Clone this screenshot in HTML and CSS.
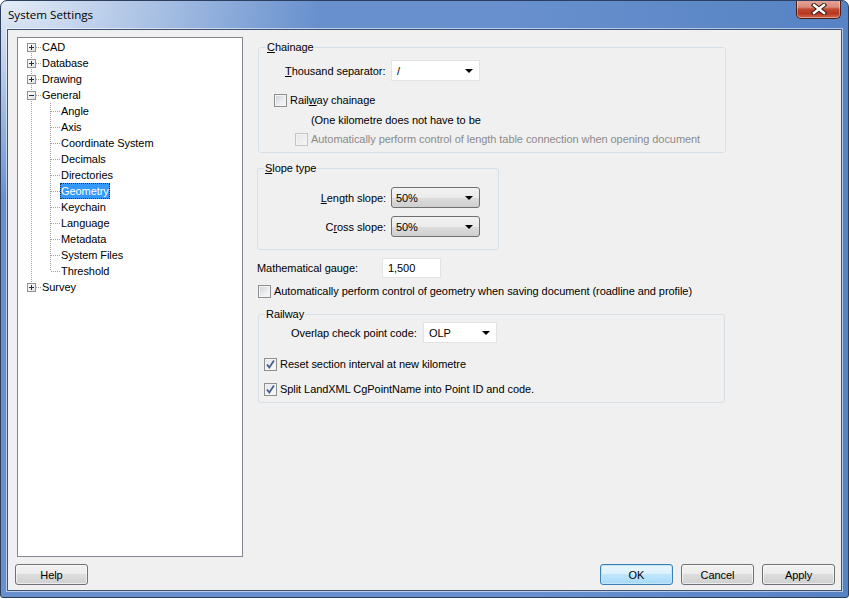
FILE: index.html
```html
<!DOCTYPE html>
<html lang="en">
<head>
  <meta charset="UTF-8" />
  <title>System Settings</title>
  <link rel="stylesheet" href="styles.css">
</head>
<body>
  <div class="window">
    <!-- Title bar -->
    <div class="titlebar">
      <span class="title">System Settings</span>
      <div class="close-btn">
        <svg width="16" height="12" viewBox="0 0 16 12">
          <path d="M3 2 L13 10 M13 2 L3 10" stroke="#3a1a14" stroke-width="4.4" stroke-linecap="square" fill="none" />
          <path d="M3 2 L13 10 M13 2 L3 10" stroke="#fff" stroke-width="2.4" stroke-linecap="square" fill="none" />
        </svg>
      </div>
    </div>

    <div class="client">
      <div class="main">
        <!-- Tree -->
        <div class="tree">
          <ul class="root">
            <li><div class="row"><span class="exp plus"></span><span class="dots"></span><span class="label">CAD</span></div></li>
            <li><div class="row"><span class="exp plus"></span><span class="dots"></span><span class="label">Database</span></div></li>
            <li><div class="row"><span class="exp plus"></span><span class="dots"></span><span class="label">Drawing</span></div></li>
            <li>
              <div class="row"><span class="exp"></span><span class="dots"></span><span class="label">General</span></div>
              <ul class="children">
                <li class="row"><span class="dots"></span><span class="label">Angle</span></li>
                <li class="row"><span class="dots"></span><span class="label">Axis</span></li>
                <li class="row"><span class="dots"></span><span class="label">Coordinate System</span></li>
                <li class="row"><span class="dots"></span><span class="label">Decimals</span></li>
                <li class="row"><span class="dots"></span><span class="label">Directories</span></li>
                <li class="row"><span class="dots"></span><span class="label selected">Geometry</span></li>
                <li class="row"><span class="dots"></span><span class="label">Keychain</span></li>
                <li class="row"><span class="dots"></span><span class="label">Language</span></li>
                <li class="row"><span class="dots"></span><span class="label">Metadata</span></li>
                <li class="row"><span class="dots"></span><span class="label">System Files</span></li>
                <li class="row"><span class="dots"></span><span class="label">Threshold</span></li>
              </ul>
            </li>
            <li><div class="row"><span class="exp plus"></span><span class="dots"></span><span class="label">Survey</span></div></li>
          </ul>
        </div>

        <!-- Settings panel -->
        <div class="panel">
          <fieldset class="group chainage">
            <legend><u>C</u>hainage</legend>
            <div class="field-row sep-row">
              <span class="sep-label"><u>T</u>housand separator:</span>
              <div class="combo flat w89"><span>/</span><i class="arrow"></i></div>
            </div>
            <div class="check-row rail-row">
              <span class="cb"></span><span>Rail<u>w</u>ay chainage</span>
            </div>
            <div class="note">(One kilometre does not have to be</div>
            <div class="check-row disabled">
              <span class="cb"></span><span>Automatically perform control of length table connection when opening document</span>
            </div>
          </fieldset>

          <fieldset class="group slope">
            <legend><u>S</u>lope type</legend>
            <div class="slope-grid">
              <span class="slope-label"><u>L</u>ength slope:</span>
              <div class="combo raised w89"><span>50%</span><i class="arrow"></i></div>
              <span class="slope-label">C<u>r</u>oss slope:</span>
              <div class="combo raised w89"><span>50%</span><i class="arrow"></i></div>
            </div>
          </fieldset>

          <div class="field-row gauge-row">
            <span class="gauge-label">Mathematical gauge:</span>
            <div class="textbox">1,500</div>
          </div>
          <div class="check-row geom-row">
            <span class="cb"></span><span>Automatically perform control of geometry when saving document (roadline and profile)</span>
          </div>

          <fieldset class="group railway">
            <legend>Railway</legend>
            <div class="field-row olp-row">
              <span class="olp-label">Overlap check point code:</span>
              <div class="combo flat w74"><span>OLP</span><i class="arrow"></i></div>
            </div>
            <div class="check-row rw-check reset-row">
              <span class="cb checked"><svg width="11" height="11" viewBox="0 0 11 11"><path d="M2 5.5 L4.3 8.5 L9 1.5" stroke="#4a5d8c" stroke-width="1.8" fill="none"/></svg></span><span>Reset section interval at new kilometre</span>
            </div>
            <div class="check-row rw-check split-row">
              <span class="cb checked"><svg width="11" height="11" viewBox="0 0 11 11"><path d="M2 5.5 L4.3 8.5 L9 1.5" stroke="#4a5d8c" stroke-width="1.8" fill="none"/></svg></span><span>Split LandXML CgPointName into Point ID and code.</span>
            </div>
          </fieldset>
        </div>
      </div>

      <!-- Dialog buttons -->
      <div class="buttons">
        <button class="btn">Help</button>
        <span class="spacer"></span>
        <button class="btn default">OK</button>
        <button class="btn">Cancel</button>
        <button class="btn">Apply</button>
      </div>
    </div>
  </div>
</body>
</html>
```

FILE: styles.css
```css
* {
  margin: 0;
  padding: 0;
  box-sizing: border-box;
}

body {
  background: #ffffff;
  font-family: 'Liberation Sans', Arial, sans-serif;
  font-size: 11px;
  letter-spacing: -0.06px;
  color: #000;
}

u {
  text-decoration: underline;
  text-underline-offset: 1px;
}

/* Window frame */
.window {
  width: 849px;
  height: 598px;
  border: 1px solid #2d3f5c;
  border-radius: 7px 7px 3px 3px;
  background:
    radial-gradient(ellipse 320px 200px at 0 0, rgba(236, 242, 250, 0.95), rgba(236, 242, 250, 0) 100%),
    linear-gradient(to right, #6790cd, #6890ce 60%, #5683c4 100%);
  display: flex;
  flex-direction: column;
  overflow: hidden;
}

.titlebar {
  height: 28px;
  display: flex;
  justify-content: space-between;
  align-items: flex-start;
  padding: 0 7px 0 7px;
}

.title {
  font-family: 'Open Sans', 'Noto Sans', sans-serif;
  font-size: 11.6px;
  letter-spacing: 0;
  color: #000;
  line-height: 28px;
}

.close-btn {
  width: 45px;
  height: 19px;
  margin-top: -1px;
  border: 1px solid #4a2018;
  border-top: none;
  border-radius: 0 0 5px 5px;
  background: linear-gradient(to bottom, #e7a799 0%, #d88a7a 40%, #c24a33 50%, #b8371f 75%, #d66a50 100%);
  box-shadow: inset 0 0 0 1px rgba(255, 255, 255, 0.35);
  display: flex;
  align-items: center;
  justify-content: center;
}

.client {
  flex: 1;
  margin: 0 6px 6px 6px;
  border: 1px solid #3e5274;
  box-shadow: 0 0 0 1px rgba(255, 255, 255, 0.55);
  background: #f0f0f0;
  display: flex;
  flex-direction: column;
}

.main {
  display: flex;
  padding: 7px 0 0 9px;
}

/* Tree */
.tree {
  width: 226px;
  height: 520px;
  background: #fff;
  border: 1px solid #828790;
  padding-top: 1px;
}

.tree ul {
  list-style: none;
}

.root {
  background: repeating-linear-gradient(to bottom, #a0a0a0 0 1px, transparent 1px 2px) 13px 8px / 1px calc(100% - 16px) no-repeat;
}

.children {
  background: repeating-linear-gradient(to bottom, #a0a0a0 0 1px, transparent 1px 2px) 32px 0 / 1px calc(100% - 8px) no-repeat;
}

.row {
  display: flex;
  align-items: center;
  height: 16px;
  line-height: 16px;
  padding-left: 9px;
}

.children .row {
  padding-left: 33px;
}

.exp {
  width: 9px;
  height: 9px;
  border: 1px solid #919191;
  background: linear-gradient(135deg, #ffffff, #e2e2e2);
  display: flex;
  align-items: center;
  justify-content: center;
  position: relative;
}

.exp::before {
  content: "";
  width: 5px;
  height: 1px;
  background: #1f3350;
}

.exp.plus::after {
  content: "";
  position: absolute;
  width: 1px;
  height: 5px;
  background: #1f3350;
}

.dots {
  width: 5px;
  height: 1px;
  background: repeating-linear-gradient(to right, #a0a0a0 0 1px, transparent 1px 2px);
}

.children .dots {
  width: 9px;
}

.label {
  padding: 0 1px;
  height: 16px;
}

.label.selected {
  background: #3399ff;
  color: #fff;
  outline: 1px dotted #1a2a40;
  outline-offset: -1px;
}

/* Right panel */
.panel {
  margin-left: 14px;
  display: flex;
  flex-direction: column;
  align-items: flex-start;
}

.group {
  border: 1px solid #d5dfe5;
  border-radius: 3px;
  padding: 0 0 0 6px;
}

.group legend {
  padding: 0 1px;
  line-height: 13px;
}

.chainage {
  width: 468px;
  margin: 4px 0 0 1px;
  padding: 6px 0 6px 7px;
}

.slope {
  width: 242px;
  margin-top: 9px;
  padding: 12px 0 12px 6px;
}

.railway {
  width: 467px;
  margin: 10px 0 0 1px;
  padding: 1px 0 6px 6px;
}

.field-row {
  display: flex;
  align-items: center;
}

.sep-label {
  margin-left: 19px;
  width: 106px;
}

.gauge-row {
  margin-top: 8px;
}

.gauge-label {
  width: 125px;
}

.olp-label {
  margin-left: 26px;
  width: 132px;
}

.check-row {
  display: flex;
  align-items: center;
  height: 13px;
  line-height: 13px;
  gap: 3px;
}

.rail-row {
  margin: 13px 0 0 8px;
}

.note {
  margin: 7px 0 0 45px;
  line-height: 13px;
}

.check-row.disabled {
  margin: 6px 0 0 29px;
  color: #8b8b8b;
}

.geom-row {
  margin: 7px 0 0 1px;
}

.reset-row {
  margin: 15px 0 0 -1px;
}

.split-row {
  margin: 12px 0 0 -1px;
}

/* Checkbox */
.cb {
  width: 13px;
  height: 13px;
  flex: none;
  border: 1px solid #8e8f8f;
  box-shadow: inset 0 0 0 1px #f4f4f4;
  background: linear-gradient(135deg, #cdd1d6 0%, #eceef0 60%, #f7f7f7 100%);
  display: flex;
  align-items: center;
  justify-content: center;
}

.disabled .cb {
  border-color: #c4c4c4;
  background: linear-gradient(135deg, #e6e6e6, #f6f6f6);
}

.cb.checked {
  background: linear-gradient(135deg, #dfe3ea 0%, #f1f3f6 60%, #fafafa 100%);
}

/* Combos and text boxes */
.combo {
  height: 21px;
  display: flex;
  align-items: center;
  justify-content: space-between;
  padding: 0 6px 0 4px;
}

.combo.flat {
  background: #fff;
  border: 1px solid #e3e3e3;
}

.combo.flat span {
  padding-left: 1px;
}

.combo.raised {
  border: 1px solid #707070;
  border-radius: 3px;
  background: linear-gradient(to bottom, #f2f2f2 0%, #ebebeb 50%, #dddddd 50%, #cfcfcf 100%);
}

.w89 {
  width: 89px;
}

.w74 {
  width: 74px;
}

.arrow {
  width: 0;
  height: 0;
  border-left: 4px solid transparent;
  border-right: 4px solid transparent;
  border-top: 4px solid #000;
}

.slope-grid {
  display: grid;
  grid-template-columns: 122px 89px;
  column-gap: 5px;
  row-gap: 8px;
  align-items: center;
}

.slope-label {
  text-align: right;
}

.textbox {
  width: 59px;
  height: 20px;
  background: #fff;
  border: 1px solid #e3e3e3;
  line-height: 18px;
  padding-left: 5px;
}

/* Buttons */
.buttons {
  display: flex;
  margin-top: 7px;
  padding: 0 6px 0 7px;
  gap: 8px;
}

.spacer {
  flex: 1;
}

.btn {
  width: 73px;
  height: 21px;
  font-family: inherit;
  font-size: 11px;
  letter-spacing: -0.06px;
  color: #000;
  border: 1px solid #707070;
  border-radius: 3px;
  background: linear-gradient(to bottom, #f2f2f2 0%, #ebebeb 50%, #dddddd 50%, #cfcfcf 100%);
  box-shadow: inset 0 0 0 1px rgba(255, 255, 255, 0.6);
}

.btn.default {
  border-color: #3c7fb1;
  background: linear-gradient(to bottom, #eaf6fd 0%, #d9f0fc 50%, #bee6fd 50%, #a7d9f5 100%);
  box-shadow: inset 0 0 0 1px #c2e6f8;
}
```
